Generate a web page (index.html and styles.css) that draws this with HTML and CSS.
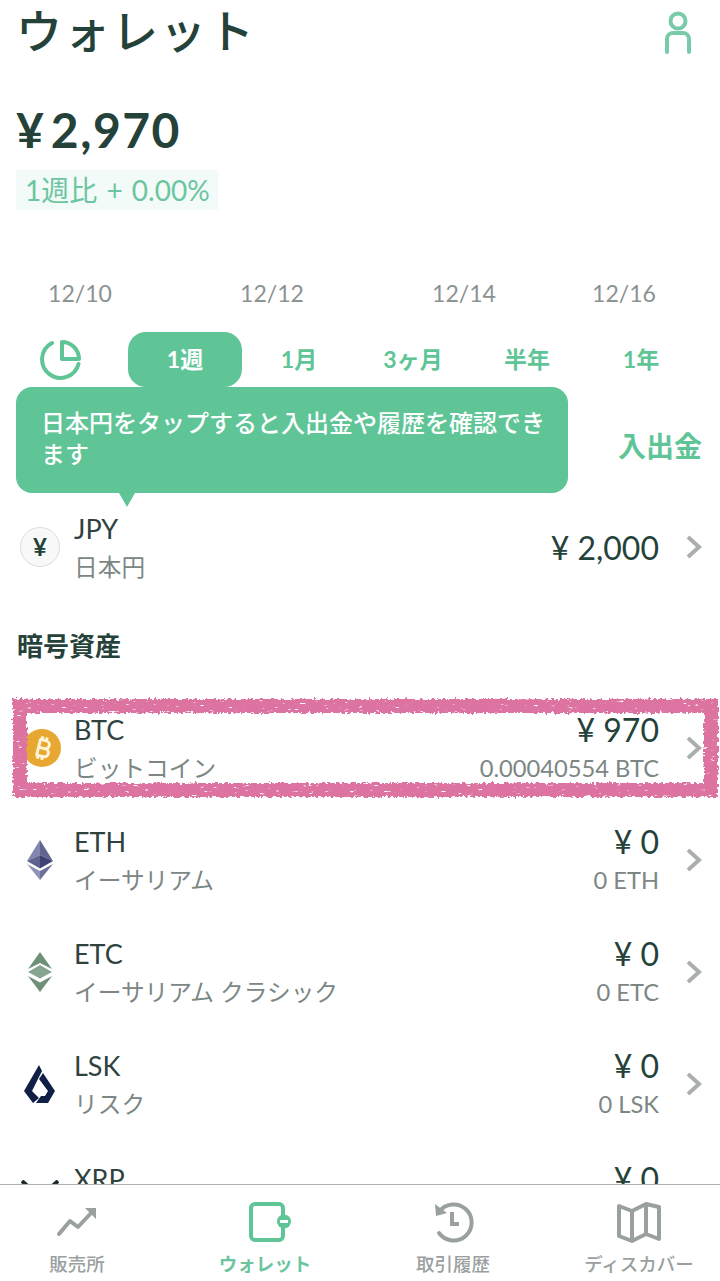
FILE: index.html
```html
<!DOCTYPE html>
<html lang="ja">
<head>
  <meta charset="UTF-8" />
  <meta name="viewport" content="width=device-width, initial-scale=1.0"/>
  <title>ウォレット</title>
  <link rel="stylesheet" href="styles.css">
</head>
<body>
  <div class="app">
    <div class="content">
      <!-- HEADER -->
      <div class="header">
        <h1>ウォレット</h1>
        <svg class="user-icon" width="32" height="44" viewBox="0 0 32 44" fill="none" stroke="#78cba8" stroke-width="4" stroke-linecap="round">
          <circle cx="16" cy="10" r="7.5"/>
          <path d="M5 41V28a6 6 0 0 1 6-6h10a6 6 0 0 1 6 6v13"/>
        </svg>
      </div>

      <div class="total">¥<span class="total-num">2,970</span></div>
      <div class="change">1週比 + 0.00%</div>

      <!-- CHART AXIS -->
      <div class="dates">
        <span>12/10</span>
        <span>12/12</span>
        <span>12/14</span>
        <span>12/16</span>
      </div>

      <div class="periods">
        <svg class="pie-icon" width="42" height="42" viewBox="0 0 42 42" fill="none" stroke="#5fc597" stroke-width="4" stroke-linejoin="round" stroke-linecap="round">
          <path d="M13 4A18.5 18.5 0 1 0 39.500 25"/>
          <path d="M23 3a17 17 0 0 1 17 17H23z"/>
        </svg>
        <div class="period-list">
          <span class="period active">1週</span>
          <span class="period">1月</span>
          <span class="period">3ヶ月</span>
          <span class="period">半年</span>
          <span class="period">1年</span>
        </div>
      </div>

      <!-- JPY -->
      <div class="jpy-head">
        <span class="deposit">入出金</span>
      </div>

      <div class="row">
        <div class="coin"><span class="yen-coin">¥</span></div>
        <div class="names">
          <div class="sym">JPY</div>
          <div class="sub">日本円</div>
        </div>
        <div class="amounts"><div class="value">¥ 2,000</div></div>
        <svg class="chev" width="16" height="24" viewBox="0 0 16 24" fill="none" stroke="#aaaeae" stroke-width="4"><path d="M2 2l11 10L2 22"/></svg>
      </div>

      <h2>暗号資産</h2>

      <!-- COINS -->
      <div class="row">
        <div class="coin">
          <svg class="btc" width="38" height="38" viewBox="0 0 38 38">
            <circle cx="19" cy="19" r="19" fill="#e8a730"/>
            <g transform="rotate(14 19 19)" fill="none" stroke="#fff3d8" stroke-width="3">
              <path d="M14.500 11h7a4 4 0 0 1 0 8h-7m0 0h8a4 4 0 0 1 0 8h-8M15.500 11v16M17 7.500v3.500M21.500 7.500v3.500M17 27v3.500M21.500 27v3.500"/>
            </g>
          </svg>
        </div>
        <div class="names">
          <div class="sym">BTC</div>
          <div class="sub">ビットコイン</div>
        </div>
        <div class="amounts">
          <div class="value">¥ 970</div>
          <div class="sub">0.00040554 BTC</div>
        </div>
        <svg class="chev" width="16" height="24" viewBox="0 0 16 24" fill="none" stroke="#aaaeae" stroke-width="4"><path d="M2 2l11 10L2 22"/></svg>
      </div>

      <div class="row">
        <div class="coin">
          <svg width="26" height="40" viewBox="0 0 26 40">
            <path d="M13 0L0 21l13-6z" fill="#8385ae"/>
            <path d="M13 0l13 21-13-6z" fill="#62658f"/>
            <path d="M13 15L0 21l13 7.500z" fill="#5f628f"/>
            <path d="M13 15l13 6-13 7.500z" fill="#3f4273"/>
            <path d="M0 24l13 16v-9z" fill="#9193b5"/>
            <path d="M26 24L13 40v-9z" fill="#6e7099"/>
          </svg>
        </div>
        <div class="names">
          <div class="sym">ETH</div>
          <div class="sub">イーサリアム</div>
        </div>
        <div class="amounts">
          <div class="value">¥ 0</div>
          <div class="sub">0 ETH</div>
        </div>
        <svg class="chev" width="16" height="24" viewBox="0 0 16 24" fill="none" stroke="#aaaeae" stroke-width="4"><path d="M2 2l11 10L2 22"/></svg>
      </div>

      <div class="row">
        <div class="coin">
          <svg width="26" height="40" viewBox="0 0 26 40" fill="#6f9078">
            <path d="M13 0L1 17 13 11l12 6z"/>
            <path d="M13 13L1 20l12 6.500L25 20z" fill="#86a58e"/>
            <path d="M1 24l12 16 12-16-12 6.500z"/>
          </svg>
        </div>
        <div class="names">
          <div class="sym">ETC</div>
          <div class="sub">イーサリアム クラシック</div>
        </div>
        <div class="amounts">
          <div class="value">¥ 0</div>
          <div class="sub">0 ETC</div>
        </div>
        <svg class="chev" width="16" height="24" viewBox="0 0 16 24" fill="none" stroke="#aaaeae" stroke-width="4"><path d="M2 2l11 10L2 22"/></svg>
      </div>

      <div class="row">
        <div class="coin">
          <svg width="32" height="38" viewBox="0 0 32 38" fill="#0f1f45">
            <path d="M15 0l3 6-10 20 7 7-6 5-9-12z"/>
            <path d="M19 8l12 18-7 12H12l5-7h4l3-5-9-12z"/>
          </svg>
        </div>
        <div class="names">
          <div class="sym">LSK</div>
          <div class="sub">リスク</div>
        </div>
        <div class="amounts">
          <div class="value">¥ 0</div>
          <div class="sub">0 LSK</div>
        </div>
        <svg class="chev" width="16" height="24" viewBox="0 0 16 24" fill="none" stroke="#aaaeae" stroke-width="4"><path d="M2 2l11 10L2 22"/></svg>
      </div>

      <!-- this row runs under the tab bar -->
      <div class="row cut">
        <div class="coin">
          <svg width="38" height="32" viewBox="0 0 38 32" fill="none" stroke="#1f2a30" stroke-width="4">
            <path d="M1 1l12 11a8 8 0 0 0 12 0L37 1"/>
          </svg>
        </div>
        <div class="names">
          <div class="sym">XRP</div>
        </div>
        <div class="amounts">
          <div class="value">¥ 0</div>
        </div>
        <svg class="chev" width="16" height="24" viewBox="0 0 16 24" fill="none" stroke="#aaaeae" stroke-width="4"><path d="M2 2l11 10L2 22"/></svg>
      </div>
    </div>

    <!-- TAB BAR -->
    <div class="tabs">
      <div class="tab">
        <svg width="44" height="44" viewBox="0 0 44 44" fill="none" stroke="#9a9fa0" stroke-width="4" stroke-linecap="round" stroke-linejoin="round">
          <path d="M4 34l11-13 8 6 14-15"/>
          <path d="M30 8h11v11z" fill="#9a9fa0" stroke="none"/>
        </svg>
        <span>販売所</span>
      </div>
      <div class="tab on">
        <svg class="wallet" width="44" height="44" viewBox="0 0 44 44" fill="none" stroke="#5fc597" stroke-width="4">
          <path d="M35 15V8a4 4 0 0 0-4-4H7a4 4 0 0 0-4 4v28a4 4 0 0 0 4 4h24a4 4 0 0 0 4-4v-8"/>
          <circle cx="36" cy="21.500" r="7" fill="#5fc597" stroke="none"/>
          <path d="M32 20h8v3h-8z" fill="white" stroke="none"/>
        </svg>
        <span>ウォレット</span>
      </div>
      <div class="tab">
        <svg width="44" height="44" viewBox="0 0 44 44" fill="none" stroke="#9a9fa0" stroke-width="4">
          <path d="M8 12A18 18 0 1 1 8 33" stroke-linecap="round"/>
          <path d="M4 4l1 12 11-3z" fill="#9a9fa0" stroke="none"/>
          <path d="M21 12v12h7"/>
        </svg>
        <span>取引履歴</span>
      </div>
      <div class="tab">
        <svg width="44" height="44" viewBox="0 0 44 44" fill="none" stroke="#9a9fa0" stroke-width="4" stroke-linejoin="round">
          <path d="M2 6l13 5 14-7 13 3v32l-13-5-14 7-13-5z"/>
          <path d="M15 11v29M29 4v30"/>
        </svg>
        <span>ディスカバー</span>
      </div>
    </div>

    <!-- TOOLTIP -->
    <div class="tooltip">日本円をタップすると入出金や履歴を確認できます</div>

    <!-- PINK MARK -->
    <svg class="mark" width="720" height="110" viewBox="0 0 720 110" fill="none">
      <defs>
        <filter id="rough" x="-2%" y="-20%" width="104%" height="140%">
          <feTurbulence type="fractalNoise" baseFrequency="0.35" numOctaves="2" seed="4" result="wobble"/>
          <feDisplacementMap in="SourceGraphic" in2="wobble" scale="6" result="moved"/>
          <feTurbulence type="fractalNoise" baseFrequency="0.12 0.5" numOctaves="2" seed="9"/>
          <feColorMatrix values="0 0 0 0 0  0 0 0 0 0  0 0 0 0 0  9 0 0 0 -6.300" result="specks"/>
          <feComposite in="moved" in2="specks" operator="out"/>
        </filter>
      </defs>
      <rect x="20" y="13" width="691" height="84" stroke="#dc73a0" stroke-width="14" filter="url(#rough)"/>
    </svg>
  </div>
</body>
</html>
```

FILE: styles.css
```css
* {
  box-sizing: border-box;
}

body {
  margin: 0;
  background: white;
  font-family: "Lato", "Noto Sans CJK JP", sans-serif;
  color: #24423a;
}

.app {
  position: relative;
  width: 720px;
  height: 1281px;
  display: flex;
  flex-direction: column;
  overflow: hidden;
}

.content {
  flex: 1;
  overflow: hidden;
}

.header {
  height: 62px;
  display: flex;
  justify-content: space-between;
  padding: 0 26px 0 16px;
}

h1 {
  margin: 0;
  font-family: "Noto Sans CJK JP", sans-serif;
  font-size: 46px;
  line-height: 56px;
  font-weight: 500;
  letter-spacing: 2px;
}

.user-icon {
  margin-top: 11px;
}

.total {
  margin: 34px 0 0 16px;
  height: 68px;
  font-size: 48px;
  line-height: 68px;
  font-weight: 700;
}

.total-num {
  margin-left: 7px;
  letter-spacing: 1.500px;
}

.change {
  display: inline-block;
  margin: 6px 0 0 16px;
  padding: 0 8px 0 9px;
  height: 40px;
  line-height: 40px;
  background: #f3fbf8;
  color: #6cc5a0;
  font-size: 28px;
  word-spacing: 2px;
}

.dates {
  display: grid;
  grid-template-columns: 192px 192px 160px 64px;
  margin-top: 67px;
  padding-left: 48px;
  height: 32px;
  line-height: 32px;
  font-size: 23px;
  color: #8b9391;
}

.dates span {
  width: 64px;
  text-align: center;
}

.periods {
  display: flex;
  margin-top: 23px;
  height: 55px;
}

.pie-icon {
  margin: 7px 0 0 39px;
}

.period-list {
  display: grid;
  grid-template-columns: repeat(5, 114px);
  margin-left: 47px;
}

.period {
  text-align: center;
  line-height: 55px;
  font-size: 23px;
  font-weight: 700;
  color: #5fc597;
}

.period.active {
  background: #5fc597;
  color: white;
  border-radius: 18px;
}

.jpy-head {
  display: flex;
  justify-content: flex-end;
  height: 104px;
  padding: 40px 18px 0 0;
}

.deposit {
  font-size: 28px;
  line-height: 38px;
  font-weight: 700;
  color: #5fc597;
}

.row {
  display: flex;
  align-items: center;
  height: 112px;
  padding-right: 18px;
}

.coin {
  width: 74px;
  padding-left: 6px;
  display: flex;
  justify-content: center;
  align-items: center;
}

.btc {
  margin-left: 4px;
}

.yen-coin {
  width: 40px;
  height: 40px;
  border: 1px solid #dcdcdc;
  border-radius: 50%;
  background: #f8f8f8;
  text-align: center;
  line-height: 38px;
  font-size: 24px;
  font-weight: 700;
  color: #24423a;
}

.names {
  flex: 1;
  margin-top: 2px;
}

.sym {
  font-size: 27px;
  line-height: 38px;
  color: #2f423e;
}

.sub {
  font-size: 23.700px;
  line-height: 38px;
  color: #7c8785;
}

.amounts {
  text-align: right;
  margin: 2px 27px 0 0;
}

.value {
  font-size: 32px;
  line-height: 38px;
  color: #24423a;
}

.chev {
  flex-shrink: 0;
}

/* no sub line in view, so keep the first line where the other rows have it */
.row.cut .names,
.row.cut .amounts {
  align-self: flex-start;
  padding-top: 18px;
}

h2 {
  margin: 6px 0 0 17px;
  height: 83px;
  font-family: "Noto Sans CJK JP", sans-serif;
  font-size: 26px;
  line-height: 72px;
  font-weight: 700;
}

.tabs {
  height: 97px;
  flex-shrink: 0;
  display: grid;
  grid-template-columns: 188px 188px 188px 184px;
  margin-left: -17px;
  border-top: 1px solid #aeb1b1;
  background: white;
  position: relative;
}

.tab {
  display: flex;
  flex-direction: column;
  align-items: center;
  padding-top: 15px;
  font-size: 18.500px;
  font-weight: 500;
  color: #9a9fa0;
}

.tab span {
  margin-top: 7px;
  line-height: 26px;
}

.tab.on {
  color: #6cc5a0;
  font-weight: 700;
}

.wallet {
  margin-left: 10px;
}

.tooltip {
  position: absolute;
  left: 16px;
  top: 387px;
  width: 552px;
  height: 106px;
  padding: 20px 10px 0 25px;
  border-radius: 16px;
  background: #5fc597;
  color: white;
  font-size: 24px;
  line-height: 31px;
  font-weight: 500;
}

.tooltip::after {
  content: "";
  position: absolute;
  left: 103px;
  top: 106px;
  border-left: 8px solid transparent;
  border-right: 8px solid transparent;
  border-top: 14px solid #5fc597;
}

.mark {
  position: absolute;
  left: 0;
  top: 693px;
  pointer-events: none;
}
```
